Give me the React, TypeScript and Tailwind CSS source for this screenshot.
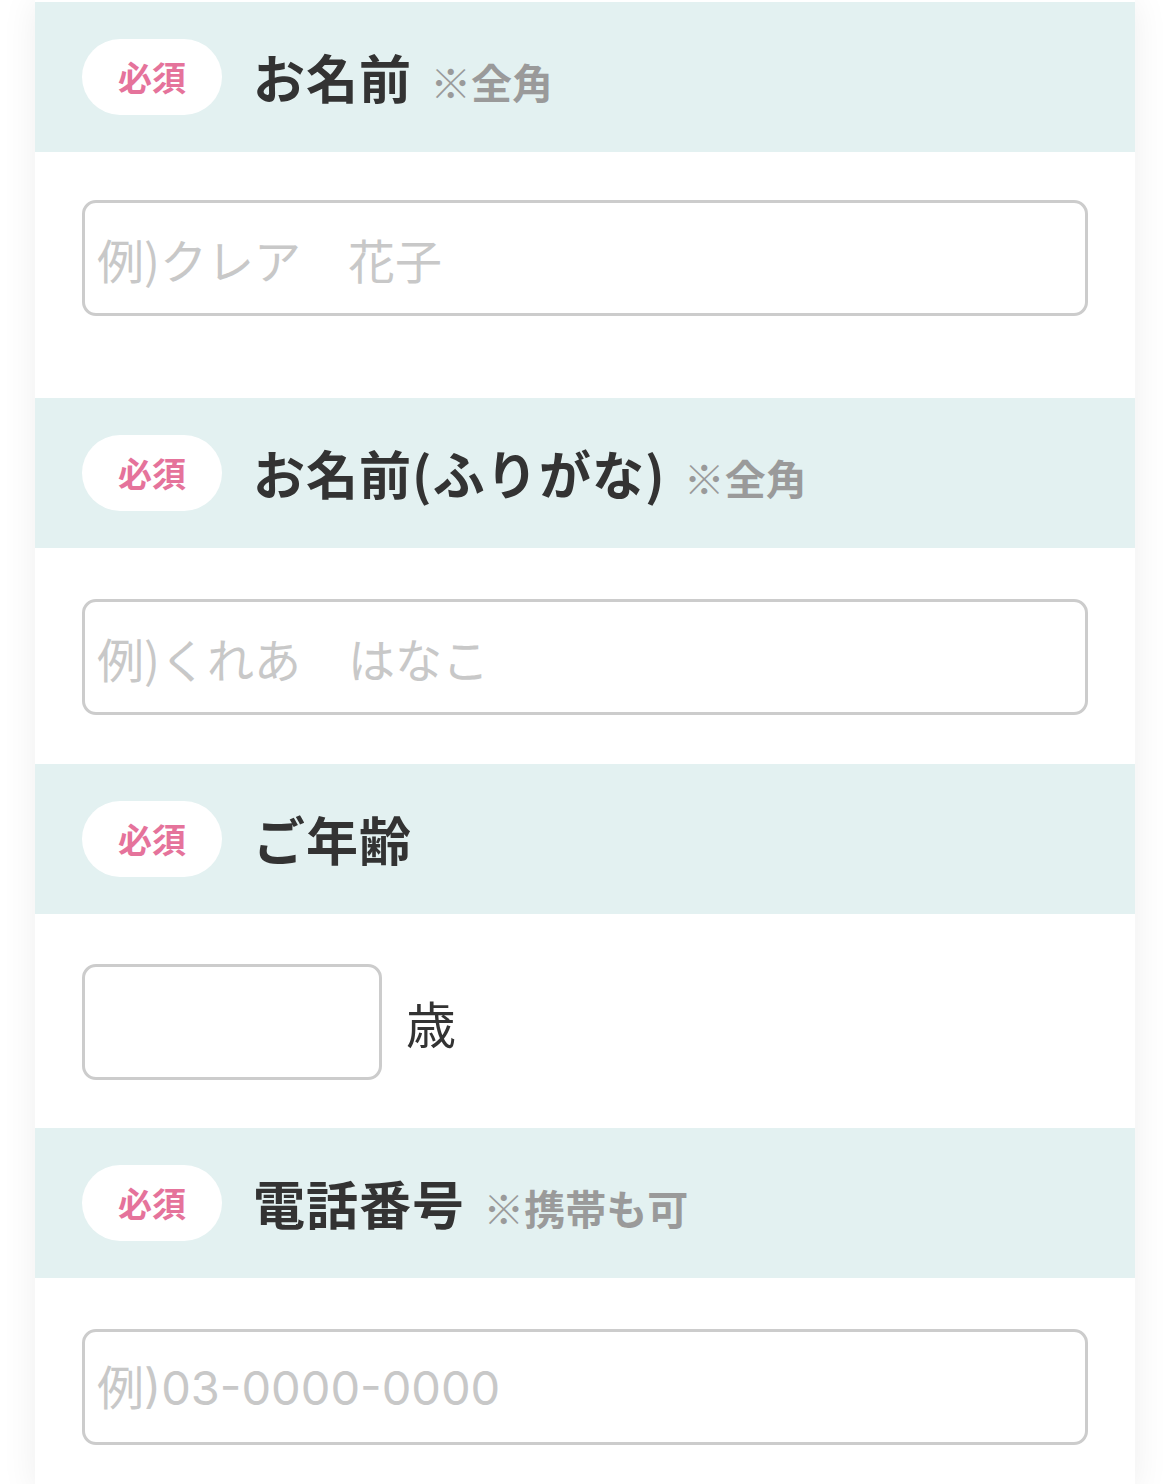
const font = { fontFamily: '"Noto Sans CJK JP", "Noto Sans", sans-serif' };
const numFont = { fontFamily: 'Inter, "Noto Sans CJK JP", sans-serif' };

function Header({ title, note }: { title: string; note?: string }) {
  return (
    <div className="h-[150px] bg-[#e3f1f1] flex items-center pl-[47px]">
      <span className="w-[140px] h-[76px] rounded-full bg-white flex items-center justify-center text-[#e5739b] text-[34px] font-bold leading-none">
        必須
      </span>
      <span className="ml-[31px] text-[52px] font-bold text-[#333333] leading-none tracking-[0.02em]">
        {title}
      </span>
      {note && (
        <span className="ml-[18px] mt-[8px] text-[41px] font-bold text-[#9a9a9a] leading-none">
          {note}
        </span>
      )}
    </div>
  );
}

function TextInput({
  placeholder,
  className,
  numeric,
}: {
  placeholder?: string;
  className?: string;
  numeric?: boolean;
}) {
  return (
    <input
      type="text"
      placeholder={placeholder}
      className={
        "h-[116px] rounded-[14px] border-[3px] border-[#cccccc] bg-white px-[12px] text-[47px] text-[#333] placeholder:text-[#c8c8c8] outline-none " +
        (className ?? "")
      }
      style={numeric ? numFont : font}
    />
  );
}

export default function App() {
  return (
    <div className="min-h-[1484px] bg-white" style={font}>
      <div className="mx-[35px] bg-white pt-[2px] shadow-[0_0_34px_rgba(0,0,0,0.07)] min-h-[1484px]">
        <Header title="お名前" note="※全角" />
        <div className="px-[47px] pt-[48px] pb-[82px]">
          <TextInput placeholder="例)クレア　花子" className="w-full" />
        </div>

        <Header title="お名前(ふりがな)" note="※全角" />
        <div className="px-[47px] pt-[51px] pb-[49px]">
          <TextInput placeholder="例)くれあ　はなこ" className="w-full" />
        </div>

        <Header title="ご年齢" />
        <div className="px-[47px] pt-[50px] pb-[48px] flex items-center">
          <TextInput className="w-[300px]" />
          <span className="ml-[24px] text-[50px] text-[#333333] leading-none">歳</span>
        </div>

        <Header title="電話番号" note="※携帯も可" />
        <div className="px-[47px] pt-[51px] pb-[48px]">
          <TextInput placeholder="例)03-0000-0000" className="w-full" numeric />
        </div>
      </div>
    </div>
  );
}
